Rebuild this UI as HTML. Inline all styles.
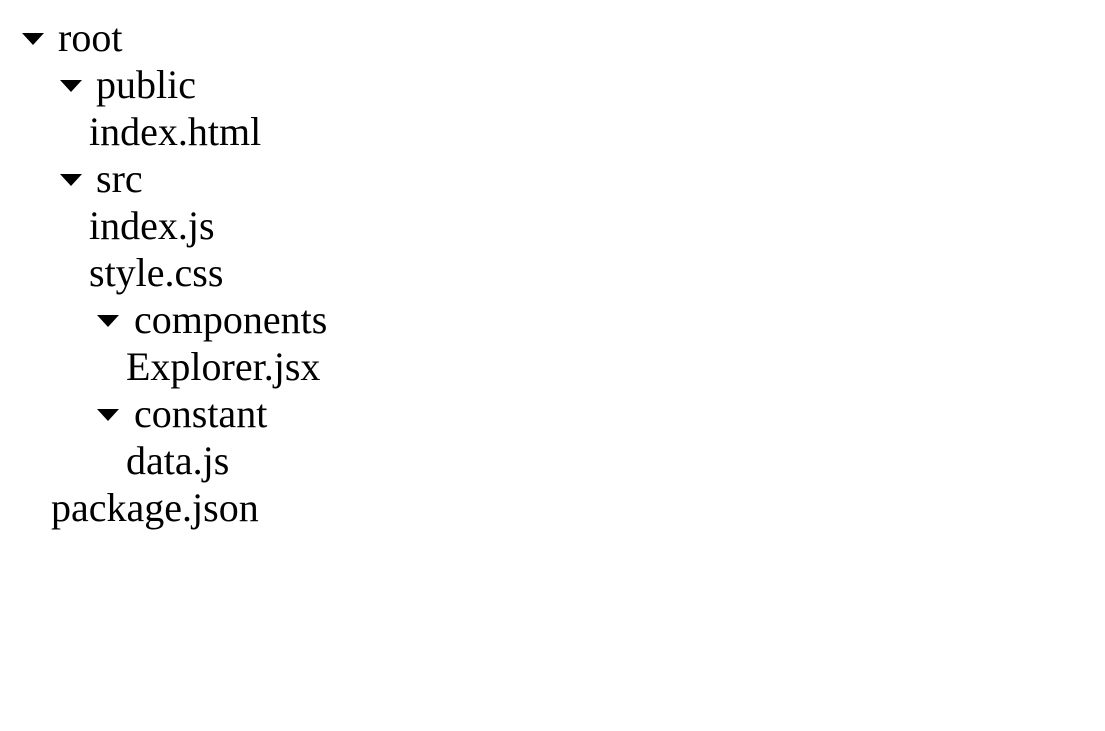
<!DOCTYPE html>
<html><head><meta charset="utf-8"><style>
body{margin:0;background:#fff;width:1105px;height:731px;overflow:hidden;font-family:"Liberation Serif",serif;font-size:40px;color:#000}
.r{position:absolute;line-height:47px;white-space:nowrap}
.t{position:absolute;width:0;height:0;border-left:11.5px solid transparent;border-right:11.5px solid transparent;border-top:12px solid #000}
</style></head><body>
<div class="t" style="left:22px;top:33px"></div><div class="r" style="left:58px;top:14px">root</div>
<div class="t" style="left:60px;top:80px"></div><div class="r" style="left:96px;top:61px">public</div>
<div class="r" style="left:89px;top:108px">index.html</div>
<div class="t" style="left:60px;top:174px"></div><div class="r" style="left:96px;top:155px">src</div>
<div class="r" style="left:89px;top:202px">index.js</div>
<div class="r" style="left:89px;top:249px">style.css</div>
<div class="t" style="left:97px;top:315px"></div><div class="r" style="left:134px;top:296px">components</div>
<div class="r" style="left:126px;top:343px">Explorer.jsx</div>
<div class="t" style="left:97px;top:409px"></div><div class="r" style="left:134px;top:390px">constant</div>
<div class="r" style="left:126px;top:437px">data.js</div>
<div class="r" style="left:51px;top:484px">package.json</div>
</body></html>
